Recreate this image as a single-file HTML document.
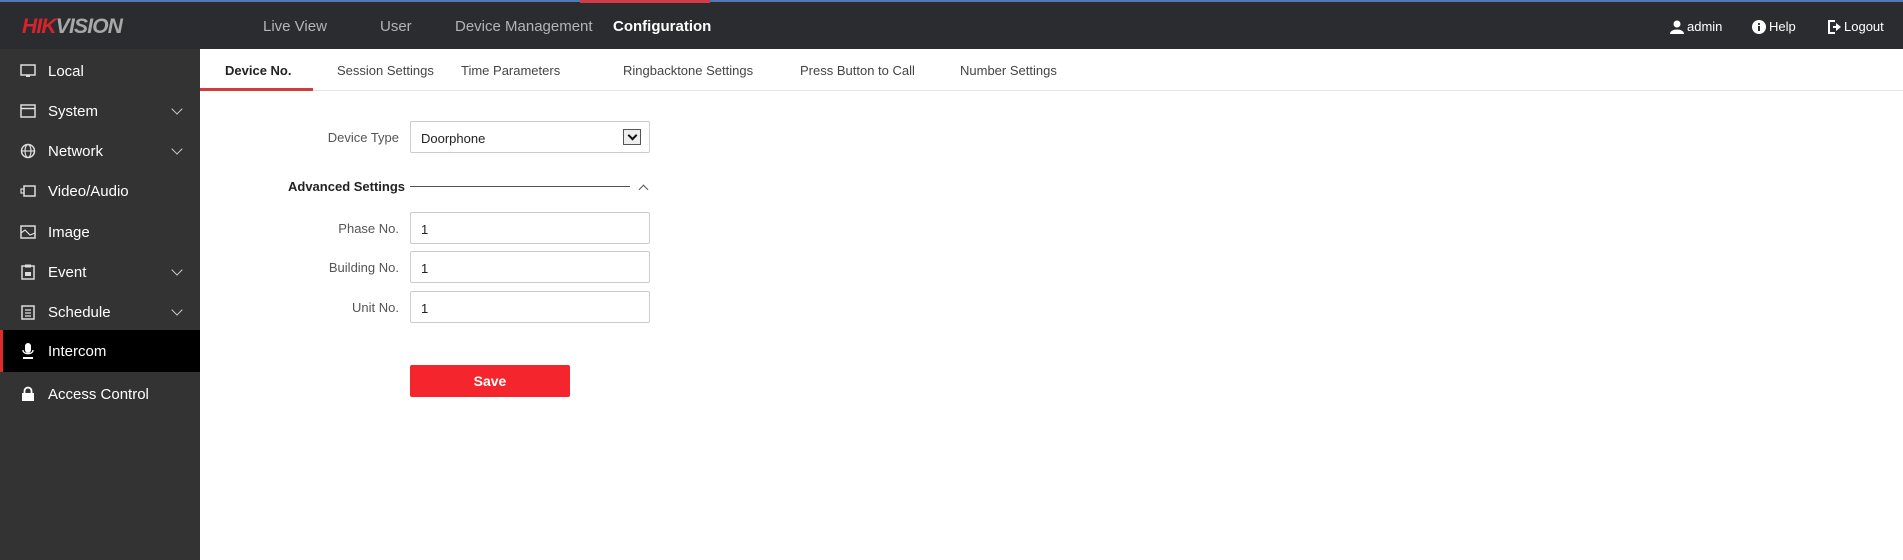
<!DOCTYPE html>
<html><head><meta charset="utf-8"><style>
*{margin:0;padding:0;box-sizing:border-box}
body{width:1903px;height:560px;overflow:hidden;background:#fff;font-family:"Liberation Sans",sans-serif;position:relative}
.top{position:absolute;left:0;top:0;width:1903px;height:49px;background:#2b2c30;border-top:2px solid #5278b4}
.logo{position:absolute;left:22px;top:13px;font-size:21px;font-weight:bold;font-style:italic;letter-spacing:-0.8px}
.nav{position:absolute;top:16px;font-size:15px;color:#b4b4b4}
.act{color:#fff;font-weight:bold}
.redtop{position:absolute;left:580px;top:0;width:130px;height:3px;background:#d23c4a}
.ri{position:absolute;top:17px;font-size:13px;color:#fff;display:flex;align-items:center;gap:3px}
.side{position:absolute;left:0;top:49px;width:200px;height:511px;background:#333}
.it{position:absolute;left:0;width:200px;height:40px;color:#fff;font-size:15px;display:flex;align-items:center}
.it .ic{position:absolute;left:20px;width:16px;height:16px}
.it span{position:absolute;left:48px}
.chev{position:absolute;left:173px;width:8px;height:8px;border-right:1.5px solid #ccc;border-bottom:1.5px solid #ccc;transform:rotate(45deg);margin-top:-4px}
.tabs{position:absolute;left:200px;top:49px;width:1703px;height:42px;border-bottom:1px solid #e4e4e4}
.tab{position:absolute;top:14px;font-size:13px;color:#444}
.lbl{position:absolute;font-size:13px;color:#555;text-align:right;width:200px;left:199px}
.inp{position:absolute;left:410px;width:240px;height:32px;border:1px solid #ccc;border-radius:2px;font-size:13px;color:#222;padding:9px 0 0 10px}
</style></head><body>
<div class="top">
<div class="logo"><span style="color:#d8232a">HIK</span><span style="color:#a8a8a8">VISION</span></div>
<div class="nav" style="left:263px">Live View</div>
<div class="nav" style="left:380px">User</div>
<div class="nav" style="left:455px">Device Management</div>
<div class="nav act" style="left:613px">Configuration</div>
<div class="ri" style="left:1670px"><svg width="14" height="14" viewBox="0 0 14 14"><circle cx="7" cy="4" r="3.5" fill="#fff"/><path d="M0 14 C0 8 14 8 14 14Z" fill="#fff"/></svg>admin</div>
<div class="ri" style="left:1752px"><svg width="14" height="14" viewBox="0 0 14 14"><circle cx="7" cy="7" r="7" fill="#fff"/><rect x="6" y="6" width="2" height="5" fill="#2b2c30"/><circle cx="7" cy="4" r="1.1" fill="#2b2c30"/></svg>Help</div>
<div class="ri" style="left:1827px"><svg width="14" height="14" viewBox="0 0 14 14"><path d="M8 1H2v12h6" stroke="#fff" stroke-width="2" fill="none"/><path d="M6 6h3V3l5 4-5 4V8H6z" fill="#fff"/></svg>Logout</div>
</div>
<div class="redtop"></div>
<div class="side">
<div class="it" style="top:2px"><svg class="ic" viewBox="0 0 16 16"><rect x="1" y="2" width="14" height="10" fill="none" stroke="#ddd" stroke-width="1.5"/><rect x="6" y="12" width="4" height="2" fill="#ddd"/></svg><span>Local</span></div>
<div class="it" style="top:42px"><svg class="ic" viewBox="0 0 16 16"><rect x="1" y="2" width="14" height="12" fill="none" stroke="#ddd" stroke-width="1.5"/><line x1="1" y1="5.5" x2="15" y2="5.5" stroke="#ddd" stroke-width="1.5"/></svg><span>System</span><i class="chev"></i></div>
<div class="it" style="top:82px"><svg class="ic" viewBox="0 0 16 16"><circle cx="8" cy="8" r="6.5" fill="none" stroke="#ddd" stroke-width="1.5"/><ellipse cx="8" cy="8" rx="3" ry="6.5" fill="none" stroke="#ddd" stroke-width="1.2"/><line x1="1.5" y1="8" x2="14.5" y2="8" stroke="#ddd" stroke-width="1.2"/></svg><span>Network</span><i class="chev"></i></div>
<div class="it" style="top:122px"><svg class="ic" viewBox="0 0 16 16"><rect x="4" y="3" width="11" height="10" fill="none" stroke="#ddd" stroke-width="1.5"/><rect x="1" y="6" width="3" height="4" fill="none" stroke="#ddd" stroke-width="1.2"/></svg><span>Video/Audio</span></div>
<div class="it" style="top:163px"><svg class="ic" viewBox="0 0 16 16"><rect x="1" y="2" width="14" height="12" fill="none" stroke="#ddd" stroke-width="1.5"/><path d="M1 9 L5 6 L10 11 L15 9" fill="none" stroke="#ddd" stroke-width="1.2"/></svg><span>Image</span></div>
<div class="it" style="top:203px"><svg class="ic" viewBox="0 0 16 16"><rect x="2" y="2" width="12" height="13" fill="none" stroke="#ddd" stroke-width="1.5"/><rect x="5" y="0.5" width="6" height="3" fill="#ddd"/><rect x="5" y="8" width="6" height="4" fill="#ddd"/></svg><span>Event</span><i class="chev"></i></div>
<div class="it" style="top:243px"><svg class="ic" viewBox="0 0 16 16"><rect x="2" y="2" width="12" height="13" fill="none" stroke="#ddd" stroke-width="1.5"/><path d="M5 6h6M5 9h6M5 12h6" stroke="#ddd" stroke-width="1.2"/></svg><span>Schedule</span><i class="chev"></i></div>
<div class="it" style="top:281px;height:42px;background:#000;border-left:3px solid #e02b2b"><svg class="ic" viewBox="0 0 16 16" style="left:17px"><rect x="5" y="0" width="6" height="10" rx="3" fill="#fff"/><path d="M3 7c0 5 10 5 10 0" stroke="#fff" fill="none" stroke-width="1.3"/><rect x="3" y="14" width="10" height="2" fill="#fff"/></svg><span style="left:45px">Intercom</span></div>
<div class="it" style="top:325px"><svg class="ic" viewBox="0 0 16 16"><path d="M4.5 7V5a3.5 3.5 0 0 1 7 0v2" stroke="#fff" stroke-width="1.8" fill="none"/><rect x="2" y="7" width="12" height="8" fill="#fff"/></svg><span>Access Control</span></div>
</div>
<div class="tabs">
<div class="tab" style="left:25px;color:#222;font-weight:bold">Device No.</div>
<div class="tab" style="left:137px">Session Settings</div>
<div class="tab" style="left:261px">Time Parameters</div>
<div class="tab" style="left:423px">Ringbacktone Settings</div>
<div class="tab" style="left:600px">Press Button to Call</div>
<div class="tab" style="left:760px">Number Settings</div>
<div style="position:absolute;left:0;top:39px;width:113px;height:3px;background:#d23c3c"></div>
</div>
<div class="lbl" style="top:130px">Device Type</div>
<div class="inp" style="top:121px">Doorphone<div style="position:absolute;right:8px;top:7px;width:18px;height:16px;border:1px solid #555;background:#eee"><div style="position:absolute;left:5px;top:2px;width:7px;height:7px;border-right:2px solid #111;border-bottom:2px solid #111;transform:rotate(45deg)"></div></div></div>
<div style="position:absolute;left:288px;top:179px;font-size:13px;font-weight:bold;color:#222">Advanced Settings</div>
<div style="position:absolute;left:410px;top:186px;width:220px;height:1px;background:#555"></div>
<div style="position:absolute;left:640px;top:186px;width:7px;height:7px;border-left:1.3px solid #555;border-top:1.3px solid #555;transform:rotate(45deg)"></div>
<div class="lbl" style="top:221px">Phase No.</div>
<div class="inp" style="top:212px">1</div>
<div class="lbl" style="top:260px">Building No.</div>
<div class="inp" style="top:251px">1</div>
<div class="lbl" style="top:300px">Unit No.</div>
<div class="inp" style="top:291px">1</div>
<div style="position:absolute;left:410px;top:365px;width:160px;height:32px;background:#f4252c;border-radius:2px;color:#fff;font-weight:bold;font-size:14px;text-align:center;line-height:32px">Save</div>
</body></html>
